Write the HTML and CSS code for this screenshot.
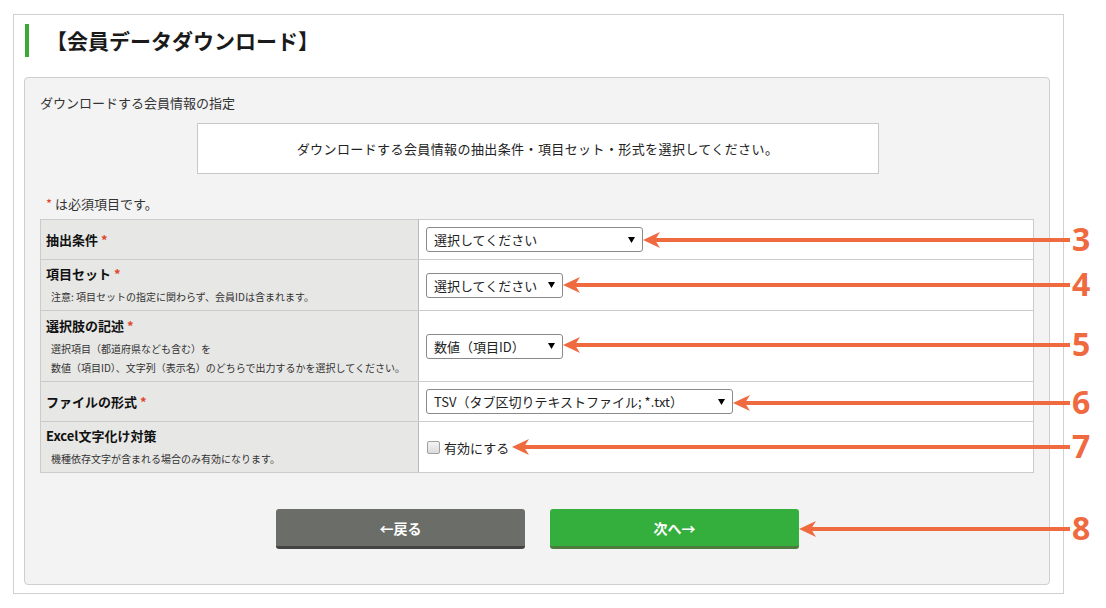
FILE: index.html
```html
<!DOCTYPE html>
<html lang="ja">
<head>
<meta charset="utf-8">
<title>会員データダウンロード</title>
<link rel="stylesheet" href="styles.css">
</head>
<body>
	<div class="frame">
		<h1 class="title">【会員データダウンロード】</h1>

		<div class="panel">
			<p class="panel-head">ダウンロードする会員情報の指定</p>
			<div class="info">ダウンロードする会員情報の抽出条件・項目セット・形式を選択してください。</div>
			<p class="req-note"><span class="req">*</span> は必須項目です。</p>

			<table class="form">
				<tr class="r1">
					<th>抽出条件 <span class="req">*</span></th>
					<td><select class="sel w1"><option>選択してください</option></select></td>
				</tr>
				<tr class="r2">
					<th>項目セット <span class="req">*</span>
						<div class="note">注意: 項目セットの指定に関わらず、会員IDは含まれます。</div>
					</th>
					<td><select class="sel w2"><option>選択してください</option></select></td>
				</tr>
				<tr class="r3">
					<th>選択肢の記述 <span class="req">*</span>
						<div class="note">選択項目（都道府県なども含む）を<br>数値（項目ID）、文字列（表示名）のどちらで出力するかを選択してください。</div>
					</th>
					<td><select class="sel w2"><option>数値（項目ID）</option></select></td>
				</tr>
				<tr class="r1">
					<th>ファイルの形式 <span class="req">*</span></th>
					<td><select class="sel w3"><option>TSV（タブ区切りテキストファイル; *.txt）</option></select></td>
				</tr>
				<tr class="r2">
					<th>Excel文字化け対策
						<div class="note">機種依存文字が含まれる場合のみ有効になります。</div>
					</th>
					<td><label class="chk"><span class="box"></span>有効にする</label></td>
				</tr>
			</table>

			<div class="buttons">
				<button class="btn back">←戻る</button>
				<button class="btn next">次へ→</button>
			</div>
		</div>
	</div>

	<!-- 注釈の矢印 -->
	<svg class="notes" width="1106" height="608" viewBox="0 0 1106 608">
		<g fill="#ef6a3f" stroke="none">
			<polygon points="643,240 660,232 655,240 660,248"/>
			<polygon points="563,285 580,277 575,285 580,293"/>
			<polygon points="563,345 580,337 575,345 580,353"/>
			<polygon points="733,403 750,395 745,403 750,411"/>
			<polygon points="512,447 529,439 524,447 529,455"/>
			<polygon points="799,529 816,521 811,529 816,537"/>
		</g>
		<g stroke="#ef6a3f" stroke-width="4">
			<line x1="655" y1="240" x2="1070" y2="240"/>
			<line x1="575" y1="285" x2="1070" y2="285"/>
			<line x1="575" y1="345" x2="1070" y2="345"/>
			<line x1="745" y1="403" x2="1070" y2="403"/>
			<line x1="524" y1="447" x2="1070" y2="447"/>
			<line x1="811" y1="529" x2="1070" y2="529"/>
		</g>
		<g class="num">
			<text x="1072" y="251">3</text>
			<text x="1072" y="296">4</text>
			<text x="1072" y="356">5</text>
			<text x="1072" y="414">6</text>
			<text x="1072" y="458">7</text>
			<text x="1072" y="540">8</text>
		</g>
	</svg>
</body>
</html>
```

FILE: styles.css
```css
body {
	margin: 0;
	background: #fff;
	color: #222;
	font-family: "Noto Sans CJK JP", "Noto Sans", sans-serif;
	font-size: 13px;
}
.frame {
	margin: 14px 0 0 13px;
	width: 1026px;
	border: 1px solid #d0d0d0;
	padding: 9px 13px 8px 10px;
	background: #fff;
}
.title {
	margin: 0 0 0 1px;
	height: 33px;
	line-height: 33px;
	border-left: 4px solid #3aa935;
	padding-left: 17px;
	font-size: 21px;
	font-weight: bold;
	color: #1a1a1a;
}
.panel {
	margin-top: 20px;
	border: 1px solid #cfcfcf;
	border-radius: 4px;
	background: #f3f3f3;
	padding: 15px 14px 35px 15px;
}
.panel-head {
	margin: 0;
	line-height: 20px;
	color: #333;
}
.info {
	width: 680px;
	height: 49px;
	margin: 10px auto 0;
	border: 1px solid #c8c8c8;
	background: #fff;
	line-height: 49px;
	text-align: center;
	letter-spacing: 0.4px;
	color: #222;
}
.req-note {
	margin: 21px 0 0 6px;
	line-height: 18px;
	color: #333;
}
.req {
	color: #e0452b;
}
.form {
	margin-top: 6px;
	width: 994px;
	border-collapse: collapse;
	border: 1px solid #b9b9b9;
	background: #fff;
}
.form th,
.form td {
	border: 1px solid #cbcbcb;
	vertical-align: middle;
}
.form th {
	width: 366px;
	background: #e7e7e5;
	text-align: left;
	font-weight: bold;
	font-size: 13px;
	line-height: 20px;
	padding: 2px 6px 2px 5px;
	color: #111;
	border-right-color: #b9b9b9;
}
.form td {
	padding: 0 7px;
}
.r1 { height: 40px; }
.r2 { height: 51px; }
.r3 { height: 71px; }
.note {
	margin: 3px 0 0 5px;
	font-size: 10px;
	font-weight: normal;
	line-height: 19px;
	color: #333;
}
.sel {
	-webkit-appearance: none;
	appearance: none;
	height: 25px;
	border: 1px solid #8a8a8a;
	border-radius: 3px;
	padding: 0 18px 0 7px;
	font-family: inherit;
	font-size: 13px;
	color: #222;
	background: #fff url("data:image/svg+xml;utf8,<svg xmlns='http://www.w3.org/2000/svg' width='7' height='6'><polygon points='0,0 7,0 3.5,6' fill='black'/></svg>") no-repeat right 7px center;
}
.w1 { width: 217px; }
.w2 { width: 137px; }
.w3 { width: 307px; }
.chk {
	display: flex;
	align-items: center;
	font-size: 13px;
	color: #222;
}
.box {
	width: 11px;
	height: 11px;
	margin: 0 4px 0 1px;
	border: 1px solid #a0a0a0;
	border-radius: 2px;
	background: linear-gradient(#f4f4f4, #dcdcdc);
}
.buttons {
	display: flex;
	justify-content: center;
	gap: 25px;
	margin-top: 36px;
}
.btn {
	width: 249px;
	height: 40px;
	border: 0;
	border-radius: 3px;
	color: #fff;
	font-family: inherit;
	font-size: 14px;
	font-weight: bold;
	padding: 0;
}
.back {
	background: #6b6e68;
	border-bottom: 3px solid #444;
}
.next {
	background: #34af3e;
	border-bottom: 3px solid #4d7b3e;
}
.notes {
	position: absolute;
	top: 0;
	left: 0;
	pointer-events: none;
}
.num text {
	fill: #ef6a3f;
	font-family: "Open Sans", sans-serif;
	font-weight: bold;
	font-size: 32px;
}
```
